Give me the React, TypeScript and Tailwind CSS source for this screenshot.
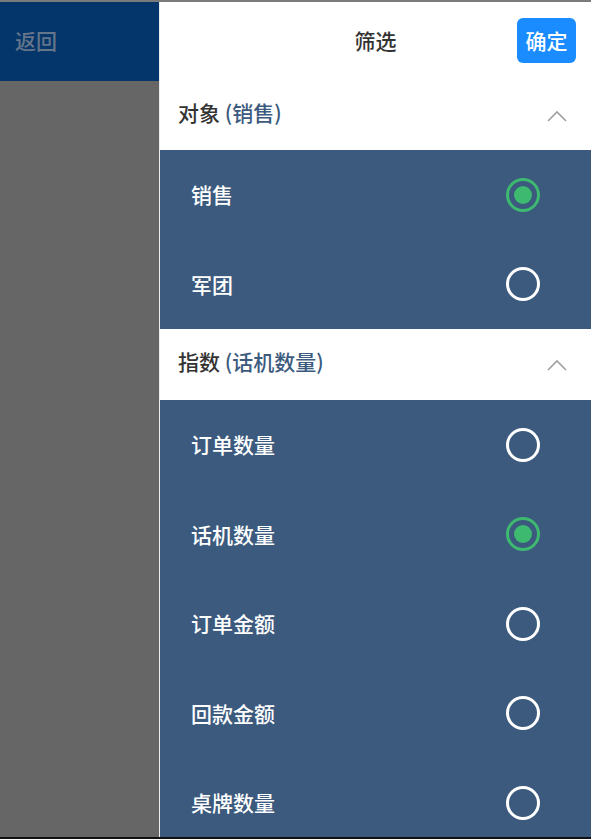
import type { ReactNode } from "react";

const font = { fontFamily: '"Noto Sans CJK SC", "Noto Sans", sans-serif' };

function Chevron() {
  return (
    <svg width="20" height="12" viewBox="0 0 20 12" fill="none">
      <polyline points="1,11 10,2 19,11" stroke="#a0a0a0" strokeWidth="1.6" />
    </svg>
  );
}

function Radio({ checked }: { checked?: boolean }) {
  if (checked) {
    return (
      <div className="flex h-[34px] w-[34px] items-center justify-center rounded-full border-[3px] border-[#3dba6f]">
        <div className="h-[18px] w-[18px] rounded-full bg-[#3dba6f]" />
      </div>
    );
  }
  return <div className="h-[34px] w-[34px] rounded-full border-[3px] border-white" />;
}

function SectionHeader({ title, value, h }: { title: string; value: string; h: string }) {
  return (
    <div className={`flex shrink-0 items-center justify-between bg-white pl-[18px] pr-[24px] ${h}`}>
      <div className="pb-[6px] text-[21px] font-medium text-[#333]">
        {title} <span className="text-[#3b5a7e]">({value})</span>
      </div>
      <Chevron />
    </div>
  );
}

function Row({ label, checked, children }: { label: string; checked?: boolean; children?: ReactNode }) {
  return (
    <div className="flex h-[89.5px] shrink-0 items-center justify-between pl-[31px] pr-[51px]">
      <span className="text-[21px] font-medium text-white">{label}</span>
      <Radio checked={checked} />
      {children}
    </div>
  );
}

export default function App() {
  return (
    <div className="flex h-[839px] w-[591px] flex-col overflow-hidden" style={font}>
      <div className="h-[2px] shrink-0 bg-[#7b7b7b]" />
      <div className="flex min-h-0 flex-1">
        <div className="flex w-[159px] shrink-0 flex-col">
          <div className="flex h-[79px] items-center bg-[#04356b] pl-[15px]">
            <span className="pb-[2px] text-[21px] font-medium text-[#65758a]">返回</span>
          </div>
          <div className="flex-1 bg-[#666666]" />
        </div>
        <div className="flex min-w-0 flex-1 flex-col overflow-hidden border-l border-[#e8ecef] bg-[#3b5a7e]">
          <div className="relative flex h-[80px] shrink-0 items-center justify-center bg-white">
            <span className="pb-[2px] text-[21px] font-medium text-[#333]">筛选</span>
            <button className="absolute right-[15px] top-[16px] h-[45px] w-[59px] rounded-[6px] bg-[#1a8cff] text-[21px] font-medium text-white">
              确定
            </button>
          </div>
          <SectionHeader title="对象" value="销售" h="h-[68px]" />
          <Row label="销售" checked />
          <Row label="军团" />
          <SectionHeader title="指数" value="话机数量" h="h-[71px]" />
          <Row label="订单数量" />
          <Row label="话机数量" checked />
          <Row label="订单金额" />
          <Row label="回款金额" />
          <Row label="桌牌数量" />
        </div>
      </div>
      <div className="h-[2px] shrink-0 bg-[#111]" />
    </div>
  );
}
